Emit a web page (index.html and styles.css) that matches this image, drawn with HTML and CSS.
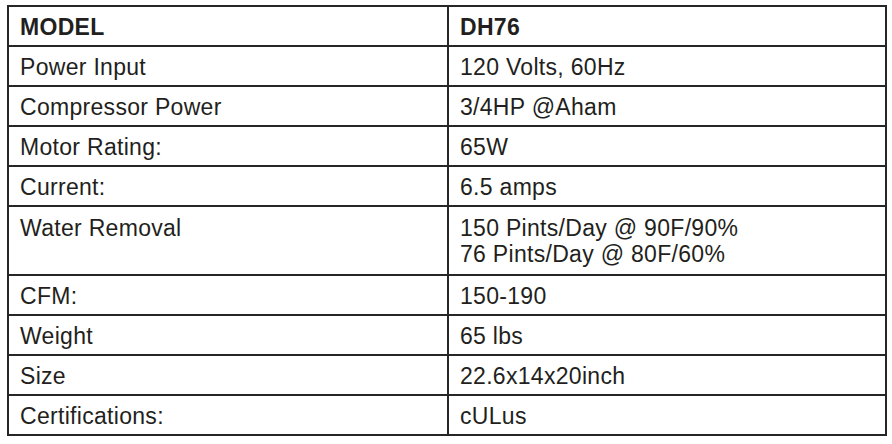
FILE: index.html
```html
<!DOCTYPE html>
<html>
<head>
<meta charset="utf-8">
<link rel="stylesheet" href="styles.css">
</head>
<body>
<table class="spec">
  <colgroup><col class="c1"><col class="c2"></colgroup>
  <tr class="head"><td>MODEL</td><td>DH76</td></tr>
  <tr><td>Power Input</td><td>120 Volts, 60Hz</td></tr>
  <tr><td>Compressor Power</td><td>3/4HP @Aham</td></tr>
  <tr><td>Motor Rating:</td><td>65W</td></tr>
  <tr><td>Current:</td><td>6.5 amps</td></tr>
  <tr class="multi"><td>Water Removal</td><td>150 Pints/Day @ 90F/90%<br>76 Pints/Day @ 80F/60%</td></tr>
  <tr><td>CFM:</td><td>150-190</td></tr>
  <tr><td>Weight</td><td>65 lbs</td></tr>
  <tr><td>Size</td><td>22.6x14x20inch</td></tr>
  <tr><td>Certifications:</td><td>cULus</td></tr>
</table>
</body>
</html>
```
FILE: styles.css
```css
html, body {
  margin: 0;
  padding: 0;
  background: #ffffff;
}
.spec {
  margin: 5px 0 0 7px;
  width: 878px;
  border-collapse: collapse;
  table-layout: fixed;
  font-family: "Liberation Sans", Arial, sans-serif;
  font-size: 23px;
  letter-spacing: 0.3px;
  color: #231f20;
}
.c1 { width: 440px; }
.c2 { width: 438px; }
.spec td {
  border: 2px solid #262626;
  padding: 7px 10px 5px 11px;
  line-height: 26px;
  vertical-align: top;
  white-space: nowrap;
}
.spec .head td {
  font-weight: bold;
}
.spec .multi td {
  padding-top: 8px;
  padding-bottom: 7px;
}
```
